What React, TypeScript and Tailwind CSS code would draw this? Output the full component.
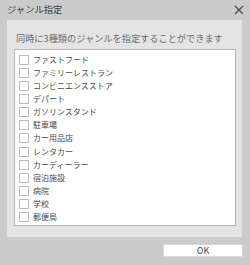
import React from "react";

const items = [
  "ファストフード",
  "ファミリーレストラン",
  "コンビニエンスストア",
  "デパート",
  "ガソリンスタンド",
  "駐車場",
  "カー用品店",
  "レンタカー",
  "カーディーラー",
  "宿泊施設",
  "病院",
  "学校",
  "郵便局",
];

const font = { fontFamily: '"Noto Sans CJK JP", "Noto Sans", sans-serif' };

export default function App() {
  return (
    <div className="w-[250px] h-[265px] bg-[#cbcbcb] flex flex-col" style={font}>
      <div className="h-[20px] flex items-center justify-between pl-[7px] pr-[5px]">
        <span className="text-[9.3px] text-[#3c3c3c] leading-none">ジャンル指定</span>
        <svg width="10" height="10" viewBox="0 0 10 10" className="mr-[1px]">
          <path d="M1 1 L9 9 M9 1 L1 9" stroke="#4a4a4a" strokeWidth="1.2" fill="none" />
        </svg>
      </div>
      <div className="ml-[7px] w-[235px] h-[217px] bg-[#e4e4e4] flex flex-col pl-[7px] pt-[9px]">
        <div className="h-[20px] flex items-center pl-[2px] text-[9.2px] text-[#6b6b6b] leading-none whitespace-nowrap">
          同時に3種類のジャンルを指定することができます
        </div>
        <div className="w-[222px] h-[177px] mt-[0px] bg-white border border-[#b8b8b8] pt-[5px] pl-[4px] flex flex-col">
          {items.map((t) => (
            <div key={t} className="h-[13.25px] flex items-start">
              <div className="w-[10px] h-[10px] border border-[#bdbdbd] bg-white shrink-0" />
              <span className="ml-[4px] text-[8px] leading-[10px] text-[#4a4a4a] whitespace-nowrap">{t}</span>
            </div>
          ))}
        </div>
      </div>
      <div className="flex justify-end pr-[7px] pt-[7px]">
        <div className="w-[80px] h-[13px] bg-white border border-[#d8d8d8] flex items-center justify-center text-[9px] text-[#444] leading-none">
          OK
        </div>
      </div>
    </div>
  );
}
